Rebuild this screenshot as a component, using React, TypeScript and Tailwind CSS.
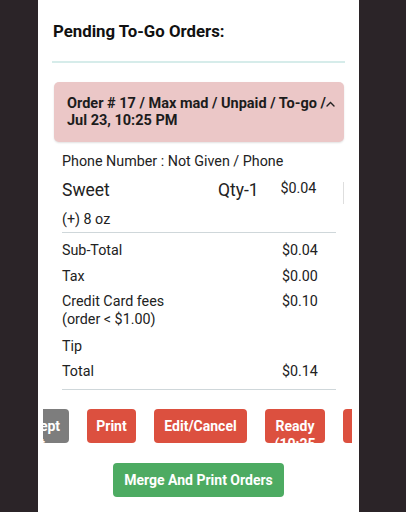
import React from "react";

const font = { fontFamily: "Roboto, 'Noto Sans', sans-serif" };

function Chevron() {
  return (
    <svg width="9" height="6" viewBox="0 0 9 6" className="mt-[6px] shrink-0">
      <path d="M1 5 L4.5 1.5 L8 5" fill="none" stroke="#222" strokeWidth="1.4" strokeLinecap="round" />
    </svg>
  );
}

function TotalRow({ label, value, className = "" }: { label: React.ReactNode; value?: string; className?: string }) {
  return (
    <div className={`flex items-start text-[14.3px] leading-[20px] text-[#222] ${className}`}>
      <div className="w-[220px]">{label}</div>
      <div className="w-[40px]">{value}</div>
    </div>
  );
}

const redBtn =
  "h-[34px] shrink-0 overflow-hidden rounded-[4px] bg-[#dc503f] px-[9px] pt-[8px] text-center text-[14px] font-bold leading-[18px] text-white";

export default function App() {
  return (
    <div className="flex min-h-screen w-full bg-[#2b2428]" style={font}>
      <div className="ml-[38px] h-[512px] w-[321px] overflow-hidden bg-white px-[15px]">
        <h1 className="pt-[19px] text-[16.8px] font-bold leading-[25px] text-[#111]">Pending To-Go Orders:</h1>
        <div className="mt-[17px] -mx-px h-[2px] bg-[#d6ecea]" />

        <div className="mt-[19px] ml-px">
          <div className="flex h-[60px] items-start rounded-[5px] bg-[#ebc7c7] pl-[13px] pr-[9px] pt-[13px] shadow-[0_1px_2px_rgba(0,0,0,0.12)]">
            <div className="whitespace-nowrap text-[14.5px] font-bold leading-[17px] text-[#1c1c1c]">
              Order # 17 / Max mad / Unpaid / To-go /
              <br />
              Jul 23, 10:25 PM
            </div>
            <div className="flex-1" />
            <Chevron />
          </div>

          <div className="pl-[8px]">
            <div className="mt-[9px] text-[14.3px] leading-[20px] text-[#222]">Phone Number : Not Given / Phone</div>

            <div className="mt-[7px] flex h-[24px] items-start text-[#222]">
              <div className="w-[157px] text-[17.5px] leading-[24px]">Sweet</div>
              <div className="w-[63px] text-[17.5px] leading-[24px]">Qty-1</div>
              <div className="w-[63px] text-[14.3px] leading-[20px]">$0.04</div>
              <div className="mt-[4px] h-[22px] w-px bg-[#dedede]" />
            </div>

            <div className="mt-[7px] text-[14.3px] leading-[20px] text-[#222]">(+) 8 oz</div>
            <div className="mt-[3px] mr-[8px] h-px bg-[#cfd7da]" />

            <TotalRow className="mt-[7px]" label="Sub-Total" value="$0.04" />
            <TotalRow className="mt-[6px]" label="Tax" value="$0.00" />
            <div className="mt-[6px] flex items-start text-[14.3px] leading-[18px] text-[#222]">
              <div className="w-[220px]">
                Credit Card fees
                <br />
                (order &lt; $1.00)
              </div>
              <div className="w-[40px]">$0.10</div>
            </div>
            <TotalRow className="mt-[8px]" label="Tip" />
            <TotalRow className="mt-[5px]" label="Total" value="$0.14" />
            <div className="mt-[8px] mr-[8px] h-px bg-[#cfd7da]" />
          </div>
        </div>

        <div className="mt-[19px] ml-[-10px] w-[309px] overflow-hidden">
          <div className="ml-[-36px] flex gap-[18px]">
            <div className="h-[34px] w-[62px] shrink-0 overflow-hidden rounded-[4px] bg-[#7d7d7d] px-[6px] pt-[8px] text-center text-[14px] font-bold leading-[18px] text-white">
              Accept At
            </div>
            <div className={`${redBtn} w-[49px]`}>Print</div>
            <div className={`${redBtn} w-[93px]`}>Edit/Cancel</div>
            <div className={`${redBtn} w-[60px]`}>
              Ready
              <br />
              (10:25
            </div>
            <div className={`${redBtn} w-[60px]`}>Done</div>
          </div>
        </div>

        <div className="mt-[20px] flex justify-center">
          <div className="h-[34px] w-[171px] rounded-[4px] bg-[#4dab62] text-center text-[14px] font-bold leading-[34px] text-white">
            Merge And Print Orders
          </div>
        </div>
      </div>
    </div>
  );
}
